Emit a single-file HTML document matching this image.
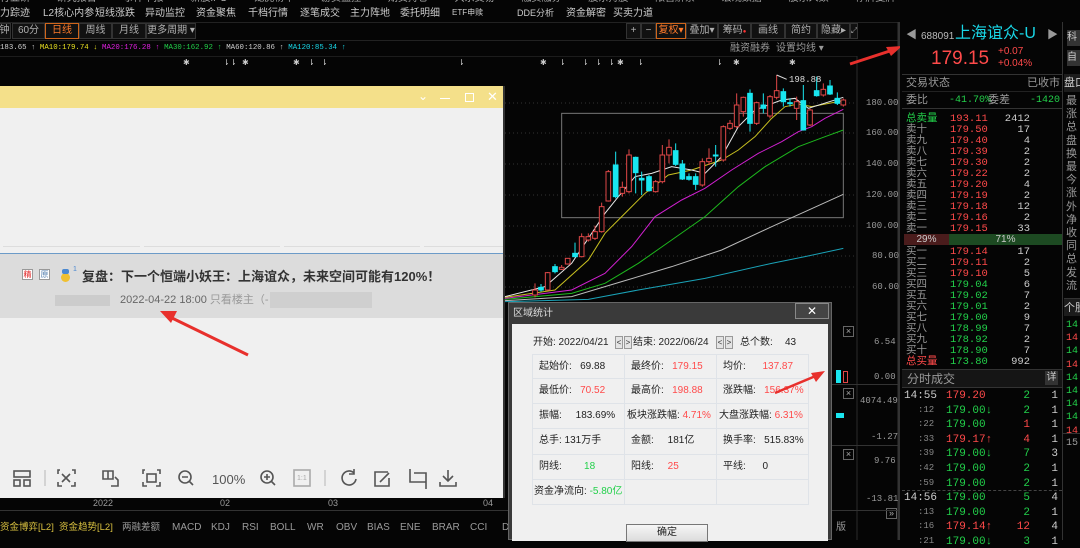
<!DOCTYPE html>
<html><head><meta charset="utf-8"><style>
*{margin:0;padding:0;box-sizing:border-box}
body{width:1080px;height:540px;overflow:hidden;background:#050505;position:relative;font-family:"Liberation Sans","Noto Sans CJK SC",sans-serif;font-size:11px;color:#c8c8c8}
.a{position:absolute;white-space:nowrap;line-height:1}
.m{font-family:"Liberation Mono","Noto Sans CJK SC",monospace}
.r{color:#ff4a4a}.g{color:#22d04a}.w{color:#d0d0d0}.gy{color:#9a9a9a}.cy{color:#19d6e6}.y{color:#e8e020}
.tab{position:absolute;top:23px;height:16px;border:1px solid #333;background:#111;color:#b0b0b0;font-size:10px;text-align:center;line-height:14px;overflow:hidden}
.cell{position:absolute;border:1px solid #dfe3e8;background:#f0f0f0;font-size:10px;color:#222;padding-left:6px;line-height:23px;white-space:nowrap}
.mn{position:absolute;top:9px;font-size:10px;color:#ccc;white-space:nowrap;line-height:1}
.fr span{display:block}
</style></head><body>

<div class="a" style="left:0;top:0;width:900px;height:22px;overflow:hidden">
<div class="a" style="top:-6px;left:0;font-size:10px;color:#aaa;word-spacing:24px">行业研 研究报告 事件早报 新股IPO 龙虎榜单 游资监控 期货持仓 大宗交易 融资融券 股东持股 限售解禁 宏观数据 股东人数 停牌复牌 AH比价</div>
<div class="mn" style="left:0">力踪迹</div>
<div class="mn" style="left:43px">L2核心内参</div>
<div class="mn" style="left:95px">短线涨跌</div>
<div class="mn" style="left:145px">异动监控</div>
<div class="mn" style="left:196px">资金聚焦</div>
<div class="mn" style="left:248px">千档行情</div>
<div class="mn" style="left:300px">逐笔成交</div>
<div class="mn" style="left:350px">主力阵地</div>
<div class="mn" style="left:400px">委托明细</div>
<div class="mn" style="left:452px;font-size:8px">ETF申赎</div>
<div class="mn" style="left:517px;font-size:9px">DDE分析</div>
<div class="mn" style="left:566px">资金解密</div>
<div class="mn" style="left:613px">买卖力道</div>
</div>
<div class="a" style="top:22px;left:0;width:900px;height:1px;background:#222"></div>

<div class="tab" style="left:-2px;width:13px">钟</div>
<div class="tab" style="left:12px;width:33px">60分钟</div>
<div class="tab" style="left:45px;width:34px;border-color:#d0651a;color:#ff7a2a">日线</div>
<div class="tab" style="left:79px;width:33px">周线</div>
<div class="tab" style="left:112px;width:34px">月线</div>
<div class="tab" style="left:146px;width:50px">更多周期 ▾</div>
<div class="tab" style="left:626px;width:15px">+</div>
<div class="tab" style="left:641px;width:15px">−</div>
<div class="tab" style="left:656px;width:30px;border-color:#d0651a;color:#ff7a2a">复权▾</div>
<div class="tab" style="left:686px;width:32px">叠加▾</div>
<div class="tab" style="left:718px;width:33px">筹码<span style="color:#f33;font-size:6px">●</span></div>
<div class="tab" style="left:751px;width:34px">画线</div>
<div class="tab" style="left:785px;width:32px">简约</div>
<div class="tab" style="left:817px;width:33px">隐藏▸</div>
<div class="tab" style="left:850px;width:8px;font-size:8px">⤢</div>
<div class="a" style="top:40px;left:0;width:900px;height:1px;background:#222"></div>

<div class="a m" style="top:45px;left:0;font-size:7.4px"><span class="w">183.65 ↑ </span><span class="y">MA10:179.74 ↓ </span><span style="color:#e020e0">MA20:176.28 ↑ </span><span class="g">MA30:162.92 ↑ </span><span class="w">MA60:120.86 ↑ </span><span class="cy">MA120:85.34 ↑</span></div>
<div class="a" style="top:44px;left:730px;font-size:10px;color:#999">融资融券</div>
<div class="a" style="top:44px;left:776px;font-size:10px;color:#999">设置均线 ▾</div>
<div class="a" style="top:56px;left:0;width:857px;height:1px;background:#1c1c1c"></div>
<div class="a" style="top:59px;left:0;font-size:8px;color:#ccc">
<span style="position:absolute;left:183px">✱</span><span style="position:absolute;left:223px">⇂</span><span style="position:absolute;left:230px">⇂</span><span style="position:absolute;left:242px">✱</span><span style="position:absolute;left:293px">✱</span><span style="position:absolute;left:308px">⇂</span><span style="position:absolute;left:321px">⇂</span><span style="position:absolute;left:458px">⇂</span><span style="position:absolute;left:540px">✱</span><span style="position:absolute;left:559px">⇂</span><span style="position:absolute;left:582px">⇂</span><span style="position:absolute;left:595px">⇂</span><span style="position:absolute;left:608px">⇂</span><span style="position:absolute;left:617px">✱</span><span style="position:absolute;left:637px">⇂</span><span style="position:absolute;left:716px">⇂</span><span style="position:absolute;left:733px">✱</span><span style="position:absolute;left:789px">✱</span></div>

<svg class="a" style="left:0;top:0" width="900" height="540">
<g stroke="#333" stroke-dasharray="1 3">
<line x1="505" y1="103" x2="857" y2="103"/><line x1="505" y1="133" x2="857" y2="133"/><line x1="505" y1="164" x2="857" y2="164"/><line x1="505" y1="195" x2="857" y2="195"/><line x1="505" y1="226" x2="857" y2="226"/><line x1="505" y1="256" x2="857" y2="256"/><line x1="505" y1="287" x2="857" y2="287"/>
</g>
<line x1="857" y1="56" x2="857" y2="540" stroke="#2a2a2a"/>
<line x1="899" y1="22" x2="899" y2="540" stroke="#333" stroke-width="3"/>
<g transform="translate(505,60) scale(0.33333)" fill="none" stroke-width="3">
<rect x="170" y="160" width="845" height="313" stroke="#777"/>
<polyline stroke="#1aa3b8" points="0,725 250,718 400,690 600,655 800,610 900,590 1015,565"/>
<polyline stroke="#bbb" points="0,722 200,710 350,665 500,620 650,570 800,500 900,455 1015,403"/>
<polyline stroke="#1db81d" points="0,718 200,700 300,670 400,610 500,540 600,470 700,380 780,320 880,260 960,230 1015,210"/>
<polyline stroke="#d020d0" points="0,715 200,690 300,640 380,560 450,470 530,420 600,385 680,330 760,280 830,245 880,215 920,200 960,175 1015,148"/>
<polyline stroke="#c8c020" points="0,712 150,690 250,600 300,520 370,450 420,400 490,345 560,330 650,300 700,270 750,230 800,175 840,140 880,132 920,140 1015,122"/>
<polyline stroke="#e8e8e8" points="0,710 120,680 200,610 300,460 340,410 390,350 440,340 500,320 560,330 600,340 650,290 700,200 750,150 830,120 870,115 910,145 1015,112"/>
</g>
<g transform="translate(505,60) scale(0.33333)" stroke-width="3">
<g stroke="#e04848" fill="none">
<path d="M90 670V712M128 636V692M170 615V630M188 594V614M230 520V592M250 520V545M270 497V540M290 428V518M310 330V425M352 365V410M372 268V400M452 360V398M472 255V370M492 238V310M592 295V380M612 265V315M655 196V305M675 180V210M695 100V205M715 110V170M755 125V195M795 105V175M815 45V118M875 110V180M915 145V198M955 70V110M1015 115V140"/>
<rect x="83" y="690" width="14" height="15" fill="#050505"/><rect x="121" y="638" width="14" height="52" fill="#050505"/><rect x="163" y="622" width="14" height="6" fill="#050505"/><rect x="181" y="595" width="14" height="17" fill="#050505"/><rect x="223" y="530" width="14" height="60" fill="#050505"/><rect x="243" y="530" width="14" height="10" fill="#050505"/><rect x="263" y="515" width="14" height="20" fill="#050505"/><rect x="283" y="440" width="14" height="75" fill="#050505"/><rect x="303" y="335" width="14" height="88" fill="#050505"/><rect x="345" y="382" width="14" height="18" fill="#050505"/><rect x="365" y="285" width="14" height="110" fill="#050505"/><rect x="445" y="365" width="14" height="30" fill="#050505"/><rect x="465" y="285" width="14" height="80" fill="#050505"/><rect x="485" y="262" width="14" height="23" fill="#050505"/><rect x="585" y="305" width="14" height="70" fill="#050505"/><rect x="605" y="295" width="14" height="10" fill="#050505"/><rect x="648" y="200" width="14" height="100" fill="#050505"/><rect x="668" y="190" width="14" height="15" fill="#050505"/><rect x="688" y="135" width="14" height="65" fill="#050505"/><rect x="708" y="112" width="14" height="43" fill="#050505"/><rect x="748" y="128" width="14" height="62" fill="#050505"/><rect x="788" y="110" width="14" height="58" fill="#050505"/><rect x="808" y="92" width="14" height="20" fill="#050505"/><rect x="868" y="125" width="14" height="20" fill="#050505"/><rect x="908" y="150" width="14" height="45" fill="#050505"/><rect x="948" y="88" width="14" height="17" fill="#050505"/><rect x="1008" y="120" width="14" height="15" fill="#050505"/>
</g>
<g stroke="#19e6f0" fill="#19e6f0">
<path d="M108 672V695M150 612V640M210 548V592M332 275V415M392 290V400M410 335V405M432 345V395M512 250V318M532 300V360M552 340V362M572 340V390M632 255V320M735 88V215M775 100V160M835 85V140M855 115V140M895 75V212M935 50V110M975 60V105M997 97V135"/>
<rect x="101" y="682" width="14" height="8"/><rect x="143" y="620" width="14" height="15"/><rect x="203" y="580" width="14" height="10"/><rect x="325" y="315" width="14" height="95"/><rect x="385" y="292" width="14" height="46"/><rect x="403" y="355" width="14" height="5"/><rect x="425" y="350" width="14" height="42"/><rect x="505" y="272" width="14" height="41"/><rect x="525" y="312" width="14" height="45"/><rect x="545" y="350" width="14" height="8"/><rect x="565" y="350" width="14" height="23"/><rect x="625" y="285" width="14" height="3"/><rect x="728" y="100" width="14" height="90"/><rect x="768" y="135" width="14" height="10"/><rect x="828" y="95" width="14" height="30"/><rect x="848" y="128" width="14" height="3"/><rect x="888" y="122" width="14" height="88"/><rect x="928" y="92" width="14" height="15"/><rect x="968" y="78" width="14" height="24"/><rect x="990" y="115" width="14" height="15"/>
</g>
<path d="M815 45L845 58" stroke="#ddd" fill="none"/>
</g>
<path d="M850 64L893 50" stroke="#e8302c" stroke-width="3"/><path d="M902 46L886 47L891 56Z" fill="#e8302c"/>
</svg>
<div class="a m" style="left:789px;top:76px;font-size:9px;color:#ddd">198.88</div>
<div class="a m gy" style="left:866px;top:99px;font-size:9px">180.00</div>
<div class="a m gy" style="left:866px;top:129px;font-size:9px">160.00</div>
<div class="a m gy" style="left:866px;top:160px;font-size:9px">140.00</div>
<div class="a m gy" style="left:866px;top:191px;font-size:9px">120.00</div>
<div class="a m gy" style="left:866px;top:222px;font-size:9px">100.00</div>
<div class="a m gy" style="left:872px;top:252px;font-size:9px">80.00</div>
<div class="a m gy" style="left:872px;top:283px;font-size:9px">60.00</div>
<div class="a" style="left:832px;top:384px;width:68px;height:1px;background:#333"></div>
<div class="a" style="left:832px;top:445px;width:68px;height:1px;background:#333"></div>
<div class="a" style="left:843px;top:326px;width:11px;height:11px;border:1px solid #666;color:#aaa;font-size:9px;text-align:center;line-height:9px">×</div>
<div class="a" style="left:843px;top:388px;width:11px;height:11px;border:1px solid #666;color:#aaa;font-size:9px;text-align:center;line-height:9px">×</div>
<div class="a" style="left:843px;top:449px;width:11px;height:11px;border:1px solid #666;color:#aaa;font-size:9px;text-align:center;line-height:9px">×</div>
<div class="a" style="left:886px;top:508px;width:11px;height:11px;border:1px solid #666;color:#aaa;font-size:9px;text-align:center;line-height:9px">»</div>
<div class="a" style="left:836px;top:370px;width:5px;height:13px;background:#19e6f0"></div>
<div class="a" style="left:843px;top:371px;width:5px;height:12px;border:1px solid #e04848"></div>
<div class="a" style="left:836px;top:413px;width:8px;height:5px;background:#19e6f0"></div>
<div class="a m gy" style="left:874px;top:338px;font-size:9px">6.54</div>
<div class="a m gy" style="left:874px;top:373px;font-size:9px">0.00</div>
<div class="a m gy" style="left:860px;top:397px;font-size:9px">4074.49</div>
<div class="a m gy" style="left:871px;top:433px;font-size:9px">-1.27</div>
<div class="a m gy" style="left:874px;top:457px;font-size:9px">9.76</div>
<div class="a m gy" style="left:866px;top:495px;font-size:9px">-13.81</div>

<div class="a" style="left:0;top:510px;width:900px;height:1px;background:#333"></div>
<div class="a gy" style="left:93px;top:499px;font-size:9px">2022</div>
<div class="a gy" style="left:220px;top:499px;font-size:9px">02</div>
<div class="a gy" style="left:328px;top:499px;font-size:9px">03</div>
<div class="a gy" style="left:483px;top:499px;font-size:9px">04</div>
<div class="a" style="left:0;top:515px;width:508px;height:25px;overflow:hidden">
<div class="a" style="left:0;top:8px;font-size:9.5px;color:#d8c040">资金博弈[L2]</div>
<div class="a" style="left:59px;top:8px;font-size:9.5px;color:#d8c040">资金趋势[L2]</div>
<div class="a gy" style="left:122px;top:8px;font-size:9.5px">两融差额</div>
<div class="a gy" style="left:172px;top:8px;font-size:10px">MACD</div>
<div class="a gy" style="left:211px;top:8px;font-size:10px">KDJ</div>
<div class="a gy" style="left:242px;top:8px;font-size:10px">RSI</div>
<div class="a gy" style="left:270px;top:8px;font-size:10px">BOLL</div>
<div class="a gy" style="left:307px;top:8px;font-size:10px">WR</div>
<div class="a gy" style="left:336px;top:8px;font-size:10px">OBV</div>
<div class="a gy" style="left:367px;top:8px;font-size:10px">BIAS</div>
<div class="a gy" style="left:400px;top:8px;font-size:10px">ENE</div>
<div class="a gy" style="left:432px;top:8px;font-size:10px">BRAR</div>
<div class="a gy" style="left:470px;top:8px;font-size:10px">CCI</div>
<div class="a gy" style="left:502px;top:8px;font-size:10px">D</div>
</div>
<div class="a" style="left:836px;top:523px;font-size:10px;color:#999">版</div>

<div class="a" style="left:0;top:86px;width:505px;height:412px;background:#f0f0f0;border-right:2px solid #333">
  <div class="a" style="left:0;top:0;width:503px;height:22px;background:#f4e08a"></div>
  <div class="a" style="left:418px;top:4px;color:#fff;font-size:12px">⌄</div>
  <div class="a" style="left:440px;top:12px;width:10px;height:1px;background:#fff"></div>
  <div class="a" style="left:465px;top:7px;width:9px;height:9px;border:1px solid #fff"></div>
  <div class="a" style="left:487px;top:4px;color:#fff;font-size:13px">✕</div>
  <div class="a" style="left:3px;top:160px;width:137px;height:1px;background:#ddd"></div>
  <div class="a" style="left:144px;top:160px;width:136px;height:1px;background:#ddd"></div>
  <div class="a" style="left:284px;top:160px;width:136px;height:1px;background:#ddd"></div>
  <div class="a" style="left:424px;top:160px;width:79px;height:1px;background:#ddd"></div>
  <div class="a" style="left:0;top:167px;width:503px;height:65px;background:#dcdcdc;border-top:1px solid #6c9bc8"></div>
  <div class="a" style="left:22px;top:183px;width:11px;height:11px;border:1px solid #999;background:#fff;color:#e02020;font-size:8px;text-align:center;line-height:9px">精</div>
  <div class="a" style="left:39px;top:183px;width:11px;height:11px;border:1px solid #999;background:#fff;color:#5580b0;font-size:8px;text-align:center;line-height:9px">原</div>
  <div class="a" style="left:61px;top:187px;width:9px;height:9px;border-radius:50%;background:#f0c030"></div>
  <div class="a" style="left:62px;top:183px;width:7px;height:5px;background:#4a88d0;border-radius:2px"></div>
  <div class="a" style="left:73px;top:180px;font-size:7px;color:#4a88d0">1</div>
  <div class="a" style="left:82px;top:184px;font-size:13px;font-weight:bold;color:#333">复盘：下一个恒端小妖王：上海谊众，未来空间可能有120%！</div>
  <div class="a" style="left:55px;top:209px;width:55px;height:11px;background:#c8c8c8;opacity:.8"></div>
  <div class="a" style="left:120px;top:209px;font-size:11px;color:#666">2022-04-22 18:00 <span style="color:#999">只看楼主（-</span></div>
  <div class="a" style="left:270px;top:206px;width:102px;height:16px;background:#cfcfcf"></div>
  <svg class="a" style="left:0;top:380px" width="503" height="26" fill="none" stroke="#555" stroke-width="1.6">
   <rect x="14" y="5" width="16" height="6"/><rect x="14" y="14" width="6" height="6"/><rect x="24" y="14" width="6" height="6"/>
   <line x1="45" y1="4" x2="45" y2="20" stroke="#ccc"/>
   <path d="M60 4h-2v4M58 16v4h4M72 4h3v4M75 16v4h-4M62 8l8 8M70 8l-8 8"/>
   <path d="M103 5h10v8h-10zM108 5v8M115 11l3 3v6h-7"/>
   <path d="M145 4h-2v4M143 16v4h4M157 4h3v4M160 16v4h-4"/><rect x="147" y="8" width="9" height="8"/>
   <circle cx="185" cy="11" r="6"/><path d="M182 11h6M189 15l4 4"/>
   <circle cx="267" cy="11" r="6"/><path d="M264 11h6M267 8v6M271 15l4 4"/>
   <rect x="294" y="4" width="16" height="16" stroke="#aaa"/>
   <line x1="325" y1="4" x2="325" y2="20" stroke="#ccc"/>
   <path d="M354 7a7 7 0 1 0 2 6M354 3v5h-5"/>
   <path d="M388 6h-13v14h14v-8M380 16l9-9"/>
   <path d="M410 3v13h16M414 7h12v16"/>
   <path d="M448 4v11M443 10l5 5 5-5M440 16v4h16v-4"/>
  </svg>
  <div class="a" style="left:212px;top:387px;font-size:13px;color:#555">100%</div>
  <div class="a" style="left:297px;top:389px;font-size:7px;color:#aaa">1:1</div>
</div>
<svg class="a" style="left:0;top:0" width="505" height="400"><path d="M248 355L172 318" stroke="#e8302c" stroke-width="3"/><path d="M160 311L177 311L171 323Z" fill="#e8302c"/></svg>

<div class="a" style="left:508px;top:302px;width:324px;height:238px;background:#3a3a3a;border:1px solid #666">
  <div class="a" style="left:4px;top:6px;font-size:10px;color:#ddd">区域统计</div>
  <div class="a" style="left:286px;top:0;width:34px;height:16px;border:1px solid #888;background:#444;color:#fff;text-align:center;font-size:12px;line-height:14px">✕</div>
  <div class="a" style="left:3px;top:21px;width:316px;height:217px;background:#f0f0f0"></div>
</div>
<div class="a" style="left:533px;top:338px;font-size:10px;color:#222">开始: 2022/04/21</div>
<div class="a" style="left:615px;top:336px;width:8px;height:13px;border:1px solid #999;background:#e4e4e4;font-size:8px;text-align:center;line-height:11px;color:#333">&lt;</div>
<div class="a" style="left:624px;top:336px;width:8px;height:13px;border:1px solid #999;background:#e4e4e4;font-size:8px;text-align:center;line-height:11px;color:#333">&gt;</div>
<div class="a" style="left:633px;top:338px;font-size:10px;color:#222">结束: 2022/06/24</div>
<div class="a" style="left:716px;top:336px;width:8px;height:13px;border:1px solid #999;background:#e4e4e4;font-size:8px;text-align:center;line-height:11px;color:#333">&lt;</div>
<div class="a" style="left:725px;top:336px;width:8px;height:13px;border:1px solid #999;background:#e4e4e4;font-size:8px;text-align:center;line-height:11px;color:#333">&gt;</div>
<div class="a" style="left:740px;top:338px;font-size:10px;color:#222">总个数:</div>
<div class="a" style="left:785px;top:338px;font-size:10px;color:#222">43</div>
<div class="cell" style="left:532px;top:354px;width:93px;height:25px">起始价: &nbsp;&nbsp;69.88</div>
<div class="cell" style="left:624px;top:354px;width:93px;height:25px">最终价: &nbsp;&nbsp;<span class="r">179.15</span></div>
<div class="cell" style="left:716px;top:354px;width:93px;height:25px">均价: &nbsp;&nbsp;&nbsp;&nbsp;&nbsp;<span class="r">137.87</span></div>
<div class="cell" style="left:532px;top:378px;width:93px;height:26px">最低价: &nbsp;&nbsp;<span class="r">70.52</span></div>
<div class="cell" style="left:624px;top:378px;width:93px;height:26px">最高价: &nbsp;&nbsp;<span class="r">198.88</span></div>
<div class="cell" style="left:716px;top:378px;width:93px;height:26px">涨跌幅: &nbsp;&nbsp;<span class="r">156.37%</span></div>
<div class="cell" style="left:532px;top:403px;width:93px;height:26px">振幅: &nbsp;&nbsp;&nbsp;&nbsp;183.69%</div>
<div class="cell" style="left:624px;top:403px;width:93px;height:26px;padding-left:2px">板块涨跌幅: <span class="r">4.71%</span></div>
<div class="cell" style="left:716px;top:403px;width:93px;height:26px;padding-left:2px">大盘涨跌幅: <span class="r">6.31%</span></div>
<div class="cell" style="left:532px;top:428px;width:93px;height:27px">总手: 131万手</div>
<div class="cell" style="left:624px;top:428px;width:93px;height:27px">金额: &nbsp;&nbsp;&nbsp;&nbsp;181亿</div>
<div class="cell" style="left:716px;top:428px;width:93px;height:27px">换手率: &nbsp;&nbsp;515.83%</div>
<div class="cell" style="left:532px;top:454px;width:93px;height:26px">阴线: &nbsp;&nbsp;&nbsp;&nbsp;&nbsp;&nbsp;&nbsp;<span class="g">18</span></div>
<div class="cell" style="left:624px;top:454px;width:93px;height:26px">阳线: &nbsp;&nbsp;&nbsp;&nbsp;<span class="r">25</span></div>
<div class="cell" style="left:716px;top:454px;width:93px;height:26px">平线: &nbsp;&nbsp;&nbsp;&nbsp;&nbsp;0</div>
<div class="cell" style="left:532px;top:479px;width:93px;height:26px;padding-left:1px">资金净流向: <span class="g">-5.80亿</span></div>
<div class="cell" style="left:624px;top:479px;width:93px;height:26px"></div>
<div class="cell" style="left:716px;top:479px;width:93px;height:26px"></div>
<div class="a" style="left:626px;top:524px;width:82px;height:18px;border:1px solid #777;background:linear-gradient(#f6f6f6,#dcdcdc);text-align:center;font-size:10px;line-height:16px;color:#222">确定</div>
<svg class="a" style="left:770px;top:365px" width="60" height="35"><path d="M5 28L48 10" stroke="#e8302c" stroke-width="2.5"/><path d="M55 6L41 8L46 17Z" fill="#e8302c"/></svg>

<div class="a" style="left:902px;top:22px;width:160px;height:518px;background:#050505"></div>
<div class="a" style="left:906px;top:30px;color:#999;font-size:11px">◀</div>
<div class="a" style="left:921px;top:32px;color:#bbb;font-size:10px">688091</div>
<div class="a" style="left:955px;top:26px;color:#19d6e6;font-size:16px">上海谊众-U</div>
<div class="a" style="left:1047px;top:30px;color:#999;font-size:11px">▶</div>
<div class="a" style="left:931px;top:49px;color:#ff4a4a;font-size:19px">179.15</div>
<div class="a" style="left:998px;top:47px;color:#ff4a4a;font-size:10px">+0.07</div>
<div class="a" style="left:998px;top:59px;color:#ff4a4a;font-size:10px">+0.04%</div>
<div class="a" style="left:902px;top:74px;width:160px;height:1px;background:#333"></div>
<div class="a gy" style="left:906px;top:78px;font-size:11px">交易状态</div>
<div class="a gy" style="left:1027px;top:78px;font-size:11px">已收市</div>
<div class="a" style="left:902px;top:91px;width:160px;height:1px;background:#222"></div>
<div class="a gy" style="left:906px;top:95px;font-size:11px">委比</div>
<div class="a g m" style="left:949px;top:96px;font-size:10px">-41.70%</div>
<div class="a gy" style="left:988px;top:95px;font-size:11px">委差</div>
<div class="a g m" style="left:1030px;top:96px;font-size:10px">-1420</div>
<div class="a" style="left:902px;top:108px;width:160px;height:1px;background:#333"></div>
<div id="ob"></div>
<div class="a" style="left:904px;top:234px;width:45px;height:11px;background:#4a1c1c;color:#ccc;font-size:10px;text-align:center;line-height:11px">29%</div>
<div class="a" style="left:949px;top:234px;width:113px;height:11px;background:#1d4a22;color:#ccc;font-size:10px;text-align:center;line-height:11px">71%</div>
<div class="a" style="left:902px;top:369px;width:160px;height:19px;background:#151515;border-top:1px solid #333;border-bottom:1px solid #333"></div>
<div class="a gy" style="left:907px;top:373px;font-size:12px">分时成交</div>
<div class="a" style="left:1045px;top:371px;width:13px;height:14px;background:#333;color:#ccc;font-size:10px;text-align:center;line-height:14px">详</div>
<div class="a" style="left:902px;top:490px;width:160px;border-top:1px dashed #444"></div>
<div class="a" style="left:1062px;top:22px;width:18px;height:518px;background:#050505;border-left:1px solid #333;overflow:hidden">
<div class="a" style="left:4px;top:8px;width:14px;height:16px;background:#333;color:#ccc;font-size:10px;line-height:16px">科</div>
<div class="a" style="left:4px;top:28px;width:14px;height:16px;background:#333;color:#ccc;font-size:10px;line-height:16px">自</div>
<div class="a" style="left:1px;top:52px;width:17px;height:18px;background:#1c1c1c;color:#ccc;font-size:11px;line-height:18px">盘口</div>
<div class="a gy" style="left:3px;top:73px;font-size:11px;line-height:13.2px;width:12px;white-space:normal">最涨总盘换最今涨外净收同总发流</div>
<div class="a" style="left:1px;top:276px;width:17px;height:18px;background:#1c1c1c;color:#ccc;font-size:11px;line-height:18px;border-top:1px solid #333">个股</div>
<div class="a m fr" style="left:3px;top:297px;font-size:10px;line-height:13.2px"><span class="g">14:</span><span class="r">14:</span><span class="g">14:</span><span class="r">14:</span><span class="g">14:</span><span class="g">14:</span><span class="g">14:</span><span class="g">14:</span><span class="r">14:</span></div>
<div class="a" style="left:0;top:411px;width:18px;height:1px;background:#333"></div>
<div class="a m gy" style="left:3px;top:417px;font-size:10px">15:</div>
</div>

<script>
var ob=document.getElementById('ob'),h='';
function row(y,l,lc,p,pc,v){h+='<div class="a" style="left:906px;top:'+y+'px;font-size:10.5px;line-height:11px;color:'+lc+'">'+l+'</div><div class="a m" style="left:950px;top:'+(y+1)+'px;font-size:10.5px;color:'+pc+'">'+p+'</div><div class="a m" style="left:1000px;width:30px;text-align:right;top:'+(y+1)+'px;font-size:10.5px;color:#ccc">'+v+'</div>';}
var R='#ff4a4a',G='#22d04a',Y='#999';
row(113,'总卖量',G,'193.11',R,'2412');
var s=[['卖十','179.50',17],['卖九','179.40',4],['卖八','179.39',2],['卖七','179.30',2],['卖六','179.22',2],['卖五','179.20',4],['卖四','179.19',2],['卖三','179.18',12],['卖二','179.16',2],['卖一','179.15',33]];
s.forEach(function(a,i){row(124+i*11,a[0],Y,a[1],R,a[2]);});
var b=[['买一','179.14',17,R],['买二','179.11',2,R],['买三','179.10',5,R],['买四','179.04',6,G],['买五','179.02',7,G],['买六','179.01',2,G],['买七','179.00',9,G],['买八','178.99',7,G],['买九','178.92',2,G],['买十','178.90',7,G]];
b.forEach(function(a,i){row(246+i*11,a[0],Y,a[1],a[3],a[2]);});
row(356,'总买量',R,'173.80',G,'992');
var t=[['14:55','179.20',R,'',2,G,1],[':12','179.00',G,'↓',2,G,1],[':22','179.00',G,'',1,R,1],[':33','179.17',R,'↑',4,R,1],[':39','179.00',G,'↓',7,G,3],[':42','179.00',G,'',2,G,1],[':59','179.00',G,'',2,G,1],['14:56','179.00',G,'',5,G,4],[':13','179.00',G,'',2,G,1],[':16','179.14',R,'↑',12,R,4],[':21','179.00',G,'↓',3,G,1]];
t.forEach(function(a,i){var y=391+i*14.6;var big=a[0].length>3;
h+='<div class="a m" style="left:'+(big?904:918)+'px;top:'+y+'px;font-size:'+(big?11:9)+'px;color:'+(big?'#ccc':'#888')+'">'+a[0]+'</div>';
h+='<div class="a m" style="left:946px;top:'+y+'px;font-size:11px;color:'+a[2]+'">'+a[1]+a[3]+'</div>';
h+='<div class="a m" style="left:1000px;width:30px;text-align:right;top:'+y+'px;font-size:11px;color:'+a[5]+'">'+a[4]+'</div>';
h+='<div class="a m" style="left:1040px;width:18px;text-align:right;top:'+y+'px;font-size:11px;color:#ccc">'+a[6]+'</div>';});
ob.innerHTML=h;
</script>
</body></html>
